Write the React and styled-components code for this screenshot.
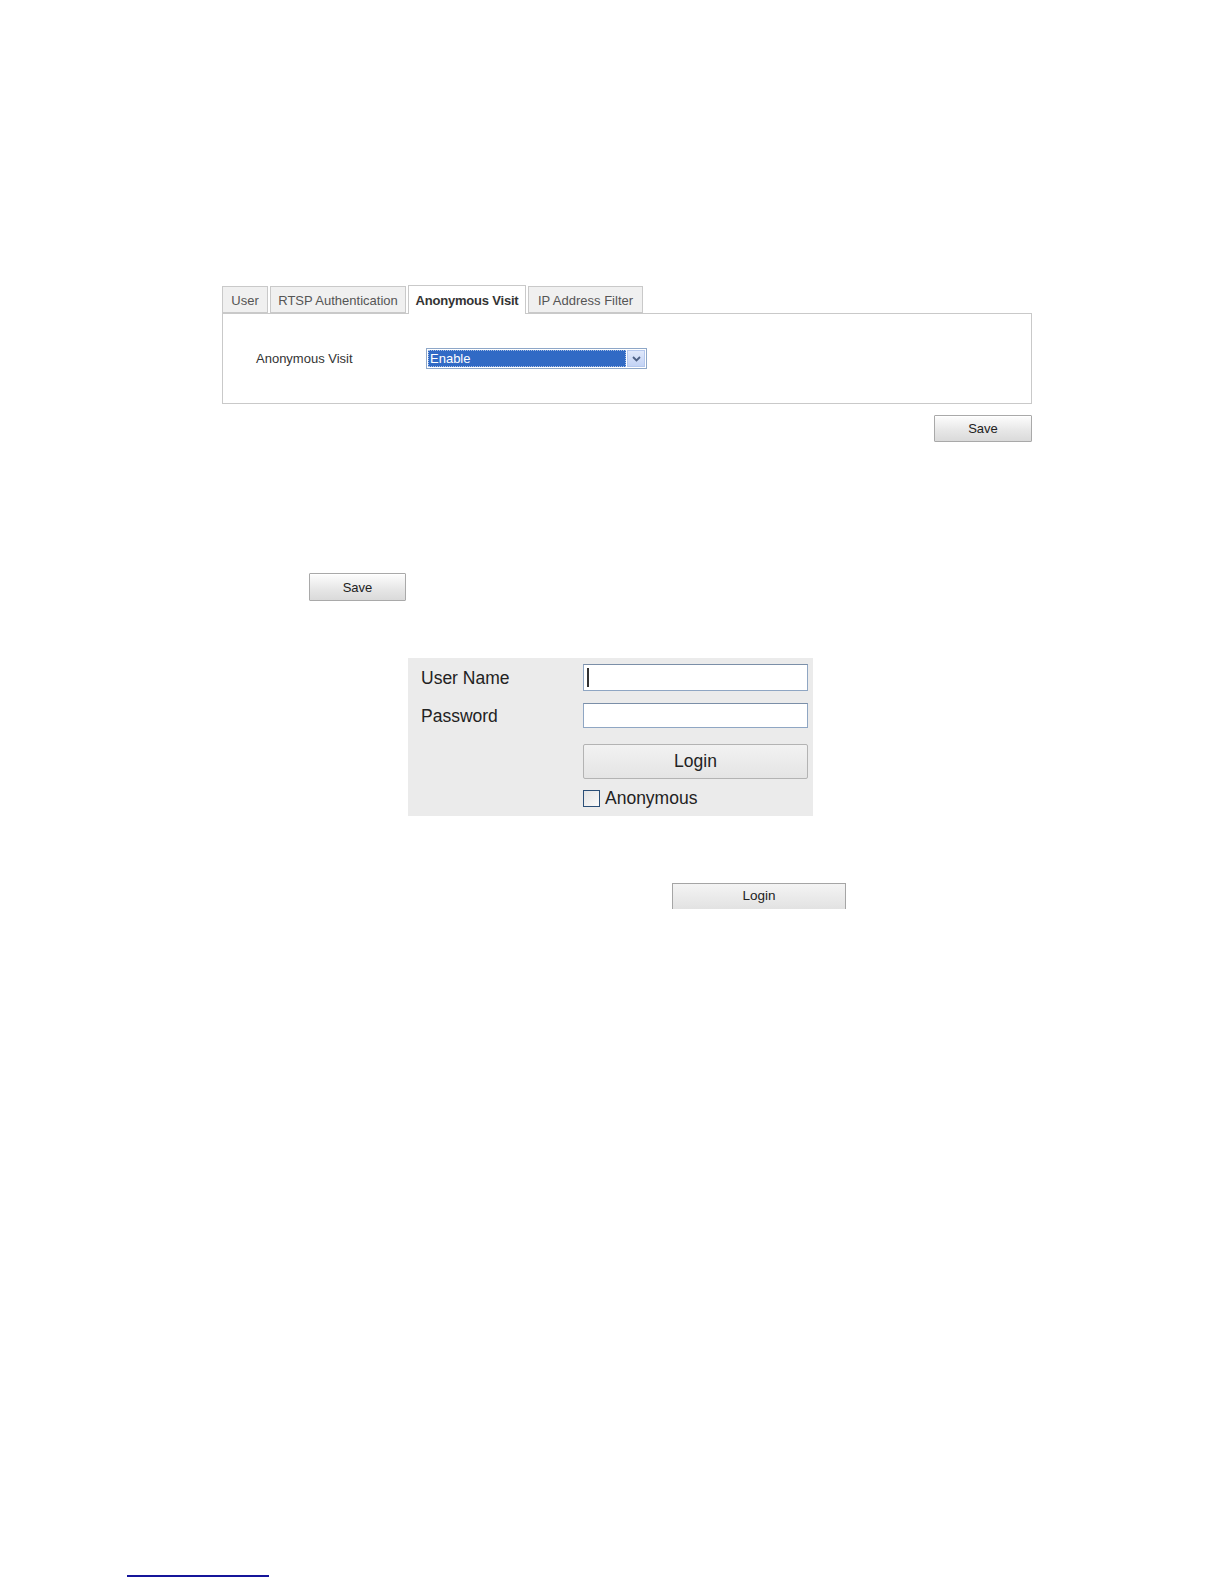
import React from "react";
import styled, { createGlobalStyle } from "styled-components";

const GlobalStyle = createGlobalStyle`
  html, body {
    margin: 0;
    padding: 0;
    background: #ffffff;
  }
  * {
    box-sizing: border-box;
  }
`;

const Page = styled.main`
  width: 1224px;
  min-height: 1584px;
  display: flex;
  flex-direction: column;
  align-items: flex-start;
  font-family: "Liberation Sans", Arial, sans-serif;
  color: #222;
`;

/* ---------- tabbed settings ---------- */

const Settings = styled.section`
  margin: 285px 0 0 222px;
  width: 810px;
  display: flex;
  flex-direction: column;
`;

const TabBar = styled.nav`
  display: flex;
  align-items: flex-end;
  gap: 2px;
  height: 28px;
`;

const Tab = styled.div`
  width: ${({ $w }) => $w}px;
  height: ${({ $active }) => ($active ? 29 : 27)}px;
  margin-bottom: ${({ $active }) => ($active ? -1 : 0)}px;
  display: flex;
  align-items: center;
  justify-content: center;
  font-size: 13px;
  font-weight: ${({ $active }) => ($active ? 700 : 400)};
  letter-spacing: ${({ $active }) => ($active ? "-0.2px" : "0")};
  color: ${({ $active }) => ($active ? "#333" : "#555")};
  background: ${({ $active }) => ($active ? "#ffffff" : "#f0f0f0")};
  border: 1px solid #c9c9c9;
  border-bottom: ${({ $active }) => ($active ? "none" : "1px solid #c9c9c9")};
  padding-top: 1px;
  position: relative;
  z-index: ${({ $active }) => ($active ? 1 : 0)};
`;

const Panel = styled.div`
  height: 91px;
  border: 1px solid #c9c9c9;
  background: #fff;
  display: flex;
  align-items: center;
  padding-left: 33px;
`;

const FieldLabel = styled.span`
  width: 170px;
  font-size: 13px;
  color: #333;
`;

const Select = styled.div`
  width: 221px;
  height: 21px;
  display: flex;
  border: 1px solid #8ea7c8;
  background: #fff;
  padding: 1px;
`;

const SelectValue = styled.div`
  flex: 1;
  background: #316ac5;
  color: #fff;
  font-size: 13px;
  line-height: 17px;
  padding-left: 2px;
  outline: 1px dotted #a9c0e6;
  outline-offset: -1px;
`;

const SelectArrow = styled.div`
  width: 18px;
  margin-left: 1px;
  background: linear-gradient(#dfe8fb, #c3d3f5);
  border: 1px solid #b5c8ee;
  display: flex;
  align-items: center;
  justify-content: center;
`;

const SaveRow = styled.div`
  margin-top: 11px;
  display: flex;
  justify-content: flex-end;
`;

const GreyButton = styled.button`
  width: ${({ $w }) => $w}px;
  height: ${({ $h }) => $h}px;
  font-family: "Liberation Sans", Arial, sans-serif;
  font-size: ${({ $fs }) => $fs}px;
  color: #222;
  background: linear-gradient(#fdfdfd, #e6e6e6 60%, #dadada);
  border: 1px solid #a9a9a9;
  border-radius: 1px;
  padding: 0;
  box-shadow: inset 0 1px 0 #ffffff;
`;

const LoneSave = styled.div`
  margin: 131px 0 0 309px;
  display: flex;
`;

/* ---------- login box ---------- */

const LoginBox = styled.section`
  margin: 57px 0 0 408px;
  width: 405px;
  height: 158px;
  background: #ebebeb;
  display: grid;
  grid-template-columns: 175px 225px;
  grid-template-rows: 27px 25px 35px 17px;
  row-gap: 12px;
  padding-top: 6px;
  font-size: 17.5px;
  color: #222;
`;

const LoginLabel = styled.label`
  padding-left: 13px;
  display: flex;
  align-items: center;
  padding-top: 1px;
`;

const TextBox = styled.div`
  border: 1px solid #8fa6c3;
  border-top-color: #7b8fa8;
  background: #fff;
  position: relative;

  ${({ $caret }) =>
    $caret &&
    `
    &::before {
      content: "";
      position: absolute;
      left: 3px;
      top: 3px;
      bottom: 3px;
      width: 2px;
      background: #333;
    }
  `}
`;

const LoginButton = styled.button`
  grid-column: 2;
  margin-top: 4px;
  height: 35px;
  font-family: "Liberation Sans", Arial, sans-serif;
  font-size: 17.5px;
  color: #222;
  background: linear-gradient(#f2f2f2, #e4e4e4);
  border: 1px solid #b3b3b3;
  border-radius: 2px;
  padding: 0;
`;

const CheckRow = styled.label`
  grid-column: 2;
  margin-top: 6px;
  display: flex;
  align-items: center;
  gap: 5px;
  line-height: 17px;
`;

const CheckBox = styled.span`
  width: 17px;
  height: 17px;
  border: 1px solid #2b4f78;
  background: linear-gradient(135deg, #e4e4e4, #fafafa);
`;

/* ---------- stray button and footnote rule ---------- */

const LoginStrip = styled.button`
  margin: 67px 0 0 672px;
  width: 174px;
  height: 26px;
  font-family: "Liberation Sans", Arial, sans-serif;
  font-size: 13.5px;
  color: #222;
  background: linear-gradient(#f4f4f4, #e2e2e2);
  border: 1px solid #a5a5a5;
  border-bottom: none;
  padding: 0 0 2px;
`;

const FootRule = styled.hr`
  margin: 666px 0 0 127px;
  width: 142px;
  height: 2px;
  border: none;
  background: #15159a;
`;

const tabs = [
  { name: "User", w: 46 },
  { name: "RTSP Authentication", w: 136 },
  { name: "Anonymous Visit", w: 118, active: true },
  { name: "IP Address Filter", w: 115 },
];

export default function App() {
  return (
    <Page>
      <GlobalStyle />
      <Settings>
        <TabBar>
          {tabs.map((t) => (
            <Tab key={t.name} $w={t.w} $active={t.active}>
              {t.name}
            </Tab>
          ))}
        </TabBar>
        <Panel>
          <FieldLabel>Anonymous Visit</FieldLabel>
          <Select>
            <SelectValue>Enable</SelectValue>
            <SelectArrow>
              <svg width="9" height="6" viewBox="0 0 9 6">
                <path d="M1 1 L4.5 4.5 L8 1" fill="none" stroke="#4d6185" strokeWidth="1.8" />
              </svg>
            </SelectArrow>
          </Select>
        </Panel>
        <SaveRow>
          <GreyButton $w={98} $h={27} $fs={13}>
            Save
          </GreyButton>
        </SaveRow>
      </Settings>

      <LoneSave>
        <GreyButton $w={97} $h={28} $fs={13}>
          Save
        </GreyButton>
      </LoneSave>

      <LoginBox>
        <LoginLabel>User Name</LoginLabel>
        <TextBox $caret />
        <LoginLabel>Password</LoginLabel>
        <TextBox />
        <LoginButton>Login</LoginButton>
        <CheckRow>
          <CheckBox />
          Anonymous
        </CheckRow>
      </LoginBox>

      <LoginStrip>Login</LoginStrip>

      <FootRule />
    </Page>
  );
}
